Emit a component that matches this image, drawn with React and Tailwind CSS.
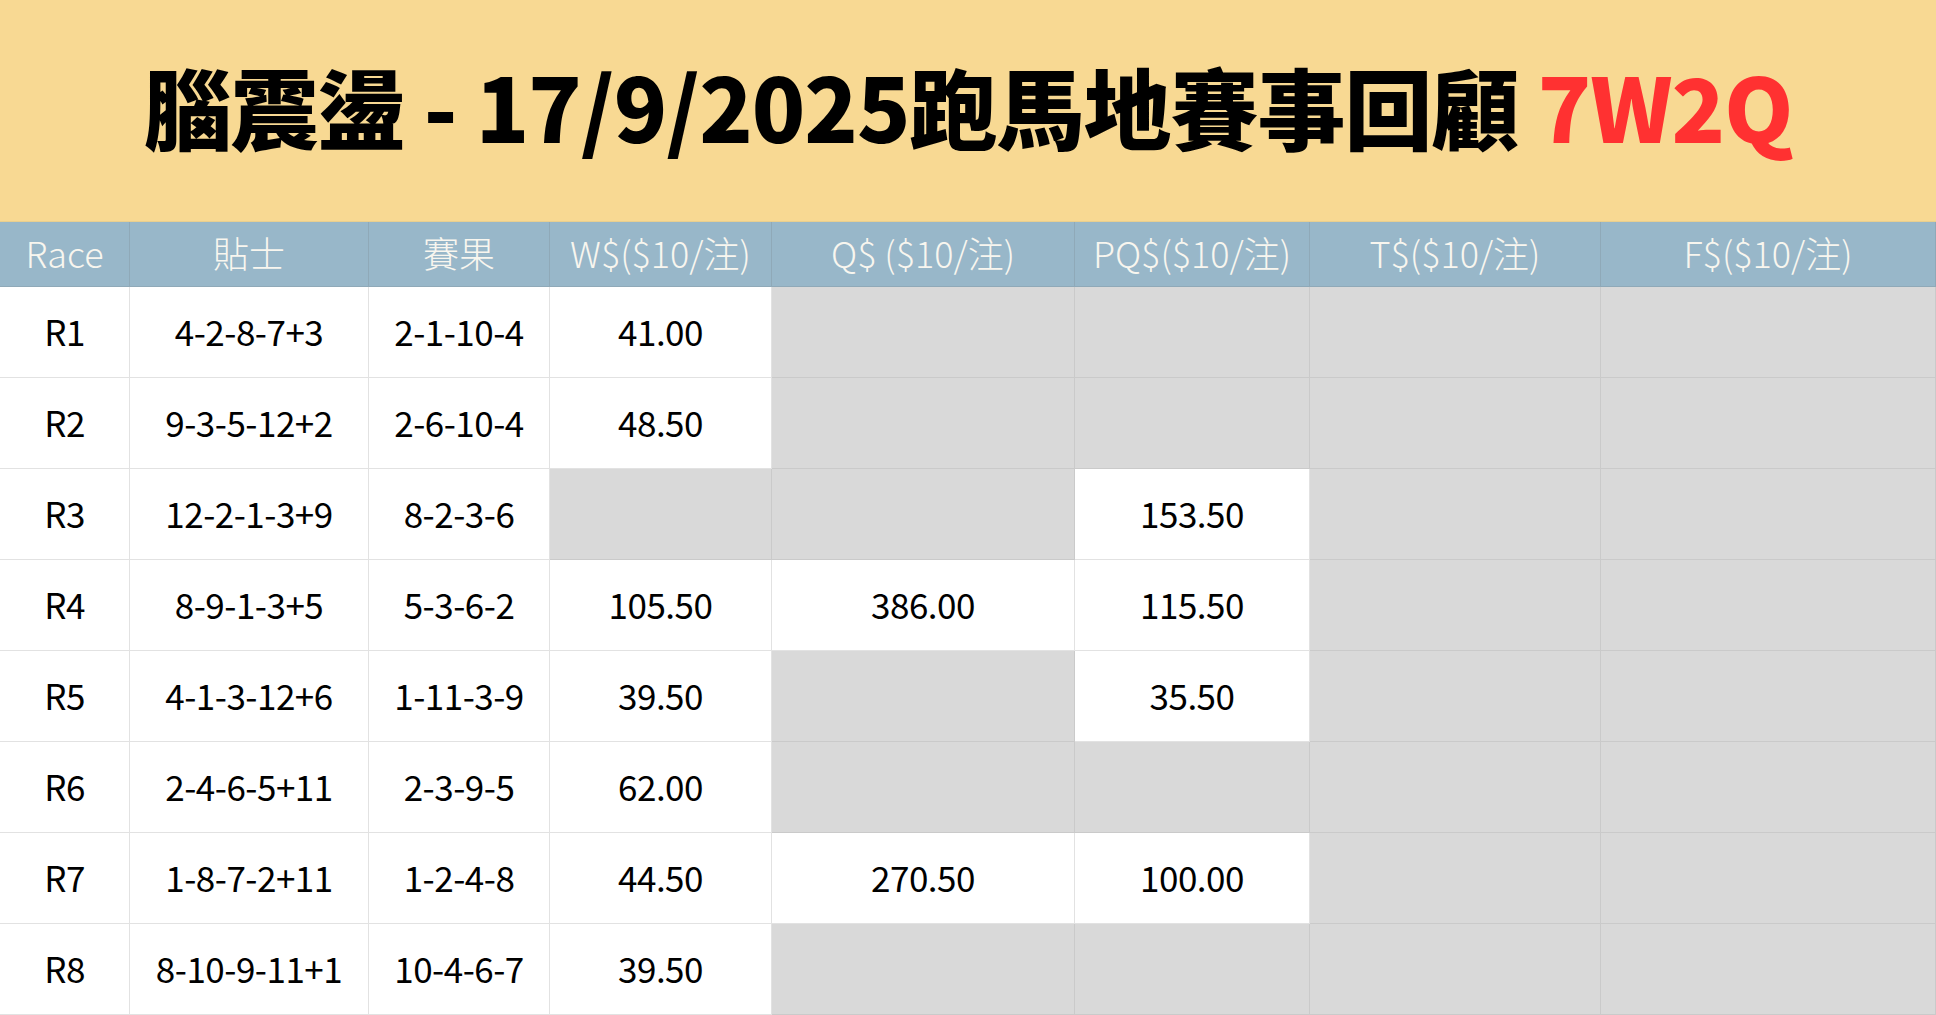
import React from "react";

const rows = [
  ["R1", "4-2-8-7+3", "2-1-10-4", "41.00", null, null],
  ["R2", "9-3-5-12+2", "2-6-10-4", "48.50", null, null],
  ["R3", "12-2-1-3+9", "8-2-3-6", null, null, "153.50"],
  ["R4", "8-9-1-3+5", "5-3-6-2", "105.50", "386.00", "115.50"],
  ["R5", "4-1-3-12+6", "1-11-3-9", "39.50", null, "35.50"],
  ["R6", "2-4-6-5+11", "2-3-9-5", "62.00", null, null],
  ["R7", "1-8-7-2+11", "1-2-4-8", "44.50", "270.50", "100.00"],
  ["R8", "8-10-9-11+1", "10-4-6-7", "39.50", null, null],
];

const headers = ["Race", "貼士", "賽果", "W$($10/注)", "Q$ ($10/注)", "PQ$($10/注)", "T$($10/注)", "F$($10/注)"];

const cellFont = { fontFamily: '"Noto Sans CJK TC", "Noto Sans", sans-serif' };

function Cell({ value, gray }) {
  return (
    <div
      className={
        gray
          ? "h-[91px] flex items-center justify-center bg-[#d9d9d9] border-r border-b border-[#cacaca]"
          : "h-[91px] flex items-center justify-center pb-[2px] bg-white border-r border-b border-[#e2e2e2] text-[35px] tracking-[-0.5px] text-black"
      }
    >
      {value}
    </div>
  );
}

export default function App() {
  return (
    <div className="w-[1936px] h-[1015px] overflow-hidden bg-white">
      <div className="h-[222px] bg-[#f8d993] flex items-center justify-center border-b border-[#e9cf8f]">
        <h1
          className="text-[88px] font-black text-black tracking-[-1px] leading-none pb-[12px]"
          style={{ fontFamily: '"Noto Sans CJK TC", "Noto Sans", sans-serif' }}
        >
          腦震盪 - 17/9/2025跑馬地賽事回顧 <span className="text-[#ff3131]">7W2Q</span>
        </h1>
      </div>
      <div className="grid grid-cols-[130px_239px_181px_222px_303px_235px_291px_1fr]" style={cellFont}>
        {headers.map((h) => (
          <div
            key={h}
            className="h-[65px] flex items-center justify-center pb-[5px] bg-[#98b7c9] border-r border-b border-[#8fa9b8] text-[36px] font-light text-[#f8f6ef]"
          >
            {h}
          </div>
        ))}
        {rows.map((r) => (
          <React.Fragment key={r[0]}>
            <Cell value={r[0]} />
            <Cell value={r[1]} />
            <Cell value={r[2]} />
            <Cell value={r[3]} gray={!r[3]} />
            <Cell value={r[4]} gray={!r[4]} />
            <Cell value={r[5]} gray={!r[5]} />
            <Cell gray />
            <Cell gray />
          </React.Fragment>
        ))}
      </div>
    </div>
  );
}
